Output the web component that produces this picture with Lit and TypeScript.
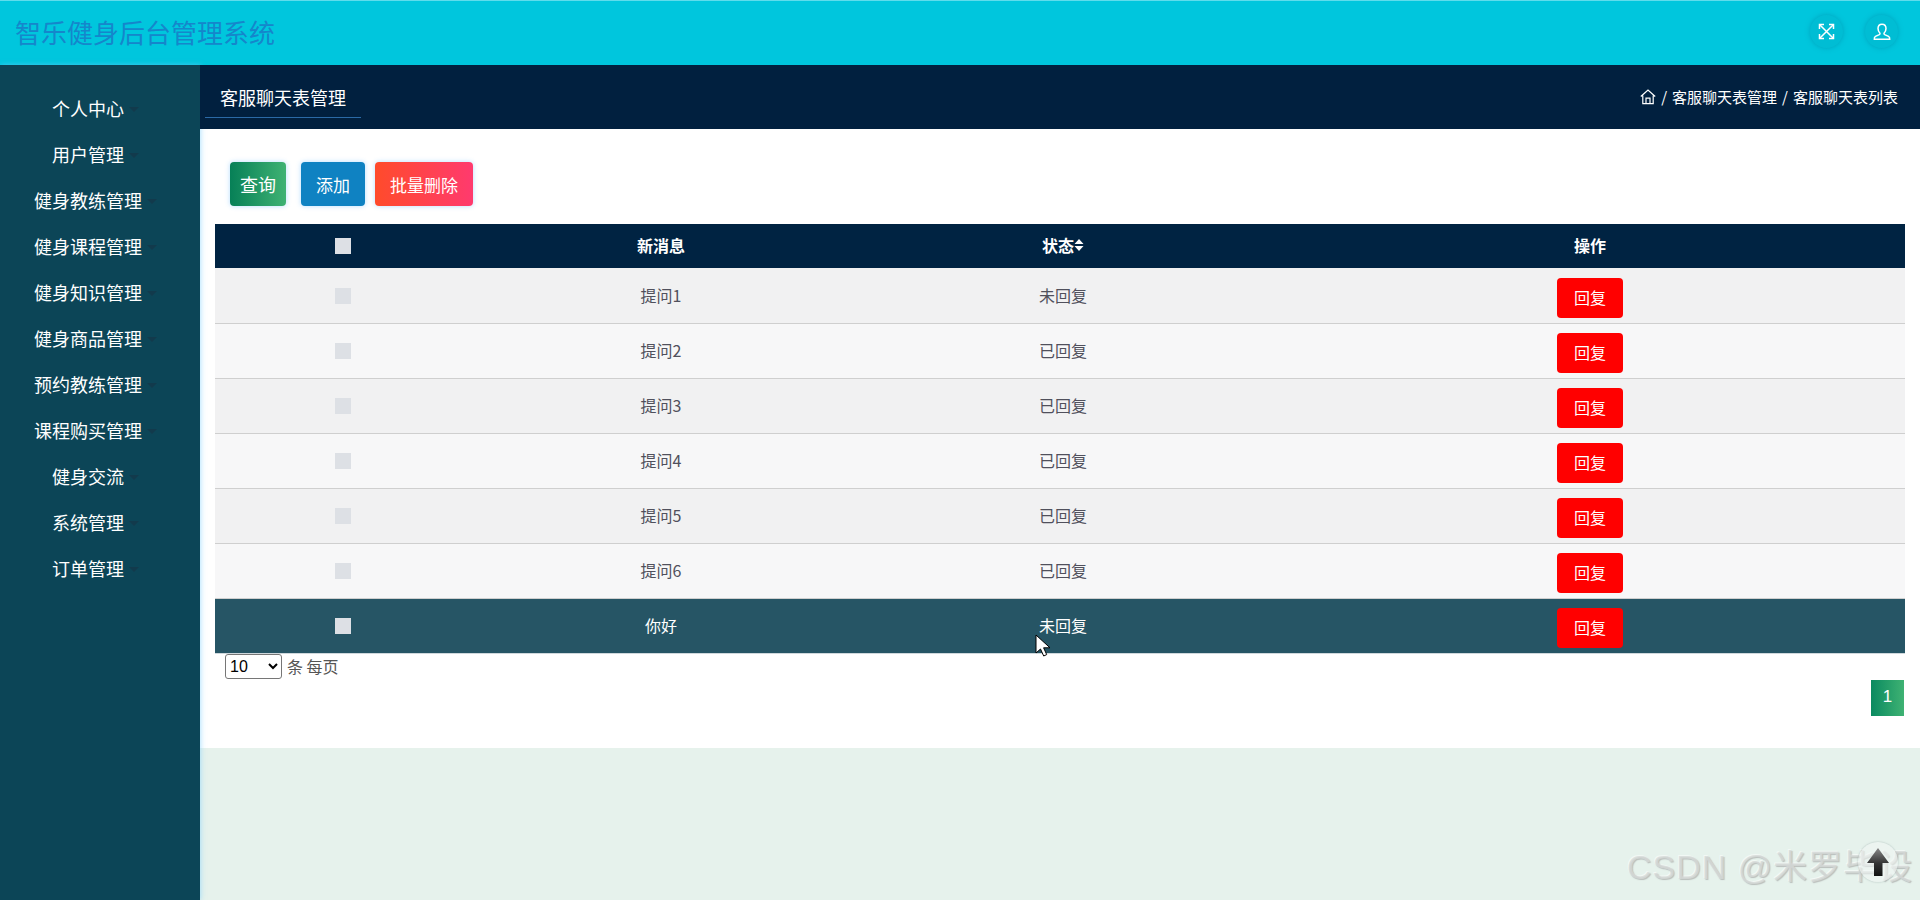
import { LitElement, html, css, svg } from "lit";
import { customElement } from "lit/decorators.js";

const MENU = ["个人中心","用户管理","健身教练管理","健身课程管理","健身知识管理","健身商品管理","预约教练管理","课程购买管理","健身交流","系统管理","订单管理"];
const ROWS = [["提问1","未回复"],["提问2","已回复"],["提问3","已回复"],["提问4","已回复"],["提问5","已回复"],["提问6","已回复"],["你好","未回复"]];

@customElement("app-root")
export class AppRoot extends LitElement {
  static styles = css`
    :host { display: block; width: 1920px; height: 900px; overflow: hidden; position: relative;
      background: #e6f2ec; font-family: "Noto Sans CJK SC", "Liberation Sans", sans-serif; }
    .top { height: 65px; box-sizing: border-box; border-top: 1px solid #5fdcec; background: #00c6dd;
      display: flex; align-items: center; justify-content: space-between; padding: 0 22px 0 15px; }
    .brand { font-size: 26px; line-height: 1; color: #1586cb; margin-top: -2px; }
    .tools { display: flex; gap: 22px; margin-top: -3px; }
    .tool { width: 33px; height: 33px; border-radius: 50%; background: #00bdd4; box-shadow: 0 0 5px rgba(0,130,160,.5);
      display: flex; align-items: center; justify-content: center; }
    .body { display: flex; height: 835px; }
    .side { width: 200px; flex: none; box-sizing: border-box; padding-top: 20px; position: relative; z-index: 1;
      background: #0c4557; box-shadow: 1px 0 5px rgba(120,205,255,.55); }
    .item { height: 46px; display: flex; align-items: center; justify-content: center; padding-right: 24px;
      color: #fff; font-size: 18px; line-height: 1; }
    .label { position: relative; }
    .caret { position: absolute; left: 100%; top: 8px; margin-left: 5px; width: 0; height: 0;
      border: 5px solid transparent; border-top-color: #123a4c; border-bottom: 0; }
    .main { flex: 1; min-width: 0; }
    .sub { height: 64px; background: #01203f; display: flex; justify-content: space-between; align-items: flex-start;
      padding: 0 22px 0 5px; position: relative; z-index: 2; }
    .subtitle { width: 156px; height: 53px; box-sizing: border-box; border-bottom: 1px solid #2b6aa6; color: #fff;
      font-size: 18px; line-height: 18px; padding: 23px 0 0 15px; }
    .crumb { display: flex; align-items: center; gap: 5px; color: #fff; font-size: 15px; margin-top: 21px; line-height: 22px; }
    .card { background: #fff; height: 619px; box-sizing: border-box; padding: 33px 15px 0; }
    .bar { display: flex; padding-left: 15px; margin-bottom: 18px; height: 44px; }
    .btn { height: 44px; box-sizing: border-box; border-radius: 4px; color: #fff; font-size: 17px; line-height: 1;
      display: flex; align-items: center; justify-content: center; box-shadow: 0 0 5px rgba(90,180,255,.45); }
    .query { width: 56px; font-size: 18px; background: linear-gradient(90deg,#078057,#3fb273); margin-right: 15px; }
    .add { width: 64px; background: #0f82c2; margin-right: 10px; }
    .del { width: 98px; background: linear-gradient(90deg,#ff4b2b,#ff3a6e); }
    table { width: 1690px; border-collapse: collapse; table-layout: fixed; font-size: 16px; text-align: center; }
    .c1 { width: 256px; } .c2 { width: 380px; } .c3 { width: 424px; } .c4 { width: 630px; }
    th { height: 44px; padding: 0 0 2px; box-sizing: border-box; background: #002342; color: #fff; font-weight: 700; font-size: 16px; line-height: 1; }
    td { height: 55px; padding: 0 0 2px; box-sizing: border-box; color: #50505c; border-bottom: 1px solid #cfcfcf; line-height: 1; }
    td.box, th.box { padding: 0; }
    td.act { padding: 0; }
    tbody tr:first-child td { padding-top: 1px; }
    tr:nth-child(odd) td { background: #f1f1f2; }
    tr:nth-child(even) td { background: #f7f7f8; }
    tr.on td { background: #265565; color: #fff; border-bottom-color: #cfd8dc; }
    .check { display: block; width: 16px; height: 16px; margin: 0 auto; background: #dde0e5; }
    .head-label { display: inline-flex; align-items: center; }
    .reply { display: flex; width: 66px; height: 40px; margin: 4px auto 0; border-radius: 4px; background: #ff0000; color: #fff;
      align-items: center; justify-content: center; font-size: 16px; padding-bottom: 2px; box-sizing: border-box; }
    .foot { display: flex; align-items: center; height: 25px; padding-left: 10px; color: #555; font-size: 16px; gap: 5px; }
    select { width: 57px; height: 25px; font-family: "Liberation Sans", sans-serif; font-size: 16px; background: #fff; color: #000;
      border: 1px solid #767676; border-radius: 3px; }
    .pages { display: flex; justify-content: flex-end; margin-top: 1px; padding-right: 1px; }
    .page { width: 33px; height: 36px; background: linear-gradient(90deg,#0a8a60,#3fb273); color: #fff; font-size: 17px; padding-bottom: 2px; box-sizing: border-box;
      font-family: "Liberation Sans", sans-serif; display: flex; align-items: center; justify-content: center; }
    .mark { position: absolute; left: 1627px; top: 844px; font-family: "Liberation Sans", "Noto Sans CJK SC", sans-serif; font-size: 34px;
      letter-spacing: 1px; line-height: 46px; white-space: nowrap; color: rgba(214,218,216,.8); text-shadow: 1px 1px 1px rgba(150,150,150,.55), -1px -1px 0 rgba(255,255,255,.5); }
    .backtop { position: absolute; left: 1858px; top: 842px; width: 40px; height: 40px; border-radius: 50%;
      background: rgba(240,246,244,.55); box-shadow: 0 0 2px rgba(130,150,150,.6); display: flex; align-items: center; justify-content: center; }
    .cursor { position: absolute; left: 1035px; top: 634px; display: block; }
  `;

  render() {
    return html`
      <div class="top">
        <div class="brand">智乐健身后台管理系统</div>
        <div class="tools">
          <div class="tool">
            <svg width="17" height="17" viewBox="0 0 17 17" fill="none" stroke="#fff" stroke-width="1.5">
              ${svg`<path d="M2 2l13 13M15 2L2 15"/><path d="M1.5 6V1.5H6M11 1.5h4.5V6M15.5 11v4.5H11M6 15.5H1.5V11"/>`}
            </svg>
          </div>
          <div class="tool">
            <svg width="18" height="18" viewBox="0 0 18 18" fill="none" stroke="#fff" stroke-width="1.5">
              ${svg`<path d="M9 1.2c-2.5 0-4 1.9-4 4.4 0 2 .9 3.4 1.8 4.4.4.6.2 1.2-.5 1.6L2.5 13.4c-1 .6-1.4 1.3-1.2 2.9h15.4c.2-1.6-.2-2.3-1.2-2.9l-3.8-1.8c-.7-.4-.9-1-.5-1.6.9-1 1.8-2.4 1.8-4.4 0-2.5-1.5-4.4-4-4.4z"/>`}
            </svg>
          </div>
        </div>
      </div>
      <div class="body">
        <nav class="side">
          ${MENU.map(m => html`<div class="item"><span class="label">${m}<i class="caret"></i></span></div>`)}
        </nav>
        <main class="main">
          <div class="sub">
            <div class="subtitle">客服聊天表管理</div>
            <div class="crumb">
              <svg width="16" height="16" viewBox="0 0 16 16" fill="none" stroke="#fff" stroke-width="1.2">
                ${svg`<path d="M.8 7.5L8 1l7.2 6.5M2.8 6.5v8.2h10.4V6.5M6 14.7V9.2h4v5.5"/>`}
              </svg>
              <span>/</span><span>客服聊天表管理</span><span>/</span><span>客服聊天表列表</span>
            </div>
          </div>
          <section class="card">
            <div class="bar">
              <div class="btn query">查询</div>
              <div class="btn add">添加</div>
              <div class="btn del">批量删除</div>
            </div>
            <table>
              <colgroup><col class="c1"><col class="c2"><col class="c3"><col class="c4"></colgroup>
              <thead>
                <tr>
                  <th class="box"><i class="check"></i></th>
                  <th>新消息</th>
                  <th><span class="head-label">状态
                    <svg width="10" height="12" viewBox="0 0 10 12" fill="#fff">${svg`<path d="M5 0l4.5 5H.5zM5 12L.5 7h9z"/>`}</svg>
                  </span></th>
                  <th>操作</th>
                </tr>
              </thead>
              <tbody>
                ${ROWS.map((r, i) => html`
                  <tr class=${i === ROWS.length - 1 ? "on" : ""}>
                    <td class="box"><i class="check"></i></td>
                    <td>${r[0]}</td>
                    <td>${r[1]}</td>
                    <td class="act"><div class="reply">回复</div></td>
                  </tr>`)}
              </tbody>
            </table>
            <div class="foot">
              <select><option>10</option><option>20</option><option>50</option></select>
              <span>条 每页</span>
            </div>
            <div class="pages"><div class="page">1</div></div>
          </section>
        </main>
      </div>
      <div class="mark">CSDN @米罗毕设</div>
      <div class="backtop">
        <svg width="24" height="30" viewBox="0 0 24 30">
          <defs><linearGradient id="g" x1="0" y1="0" x2="0" y2="1"><stop offset="0" stop-color="#888"/><stop offset=".55" stop-color="#333"/><stop offset="1" stop-color="#111"/></linearGradient></defs>
          ${svg`<path d="M12 1L23 16H16.5V29H8V16H1z" fill="url(#g)"/>`}
        </svg>
      </div>
      <svg class="cursor" width="16" height="24" viewBox="0 0 16 24">
        ${svg`<path d="M1 1v18l4.5-4 3.2 7 3-1.4-3.1-6.8H15z" fill="#fff" stroke="#000" stroke-width="1"/>`}
      </svg>
    `;
  }
}
